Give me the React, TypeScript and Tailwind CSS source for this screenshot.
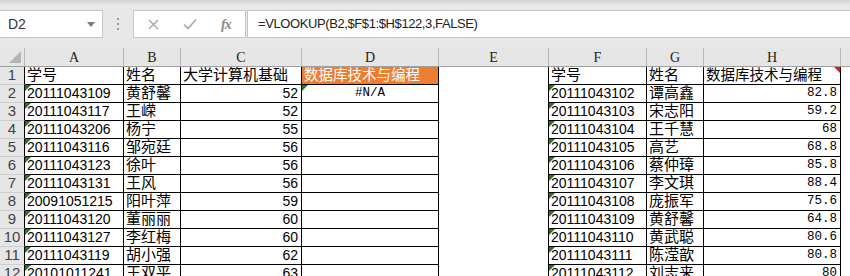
import React from 'react';

const sans = "font-['Liberation_Sans','Noto_Sans_CJK_SC',sans-serif]";
const mono = "font-['Liberation_Mono','Noto_Sans_CJK_SC',monospace]";

const left = [
    ['20111043109', '黄舒馨', '52'],
    ['20111043117', '王嵘', '52'],
    ['20111043206', '杨宁', '55'],
    ['20111043116', '邹宛廷', '56'],
    ['20111043123', '徐叶', '56'],
    ['20111043131', '王风', '56'],
    ['20091051215', '阳叶萍', '59'],
    ['20111043120', '董丽丽', '60'],
    ['20111043127', '李红梅', '60'],
    ['20111043119', '胡小强', '62'],
    ['20101011241', '王双平', '63'],
];

const right = [
    ['20111043102', '谭高鑫', '82.8'],
    ['20111043103', '宋志阳', '59.2'],
    ['20111043104', '王千慧', '68'],
    ['20111043105', '高艺', '68.8'],
    ['20111043106', '蔡仲璋', '85.8'],
    ['20111043107', '李文琪', '88.4'],
    ['20111043108', '庞振军', '75.6'],
    ['20111043109', '黄舒馨', '64.8'],
    ['20111043110', '黄武聪', '80.6'],
    ['20111043111', '陈滢歆', '80.8'],
    ['20111043112', '刘志来', '80'],
];

const GreenMark = () => (
    <span className="absolute top-0 left-0 w-0 h-0 border-t-[6px] border-r-[6px] border-t-[#1f7a1f] border-r-transparent" />
);

// table cell with black grid border
const Cell = ({ w, children, className = '', mark = false }: { w: string; children?: React.ReactNode; className?: string; mark?: boolean }) => (
    <div className={`relative ${w} h-full shrink-0 border-r border-b border-black flex items-center overflow-hidden whitespace-nowrap ${className}`}>
        {mark && <GreenMark />}
        {children}
    </div>
);

const RowNum = ({ n }: { n: number }) => (
    <div className={`w-[25px] h-full shrink-0 bg-[#e6e6e6] border-r border-r-black border-b border-b-[#cfcfcf] flex items-center justify-center text-[15px] text-[#444] ${sans}`}>
        {n}
    </div>
);

const Toolbar = () => (
    <div className="h-[48px] bg-[linear-gradient(#d2d2d2,#e8e8e8_5px,#e8e8e8)] flex items-center">
        <div className={`w-[103px] h-[28px] bg-white border border-[#c6c6c6] border-l-0 flex items-center justify-between pl-[8px] pr-[7px] text-[14px] text-[#333] ${sans}`}>
            <span>D2</span>
            <span className="w-0 h-0 border-l-[4px] border-r-[4px] border-t-[5px] border-l-transparent border-r-transparent border-t-[#7a7a7a]" />
        </div>
        <div className="w-[30px] flex flex-col items-center gap-[3px]">
            <span className="w-[2px] h-[2px] bg-[#9a9a9a]" />
            <span className="w-[2px] h-[2px] bg-[#9a9a9a]" />
            <span className="w-[2px] h-[2px] bg-[#9a9a9a]" />
        </div>
        <div className="w-[113px] h-[28px] bg-white border border-[#c6c6c6] flex items-center pl-[14px] gap-[24px]">
            <svg width="11" height="11" viewBox="0 0 11 11">
                <path d="M1 1L10 10M10 1L1 10" stroke="#a8a8a8" strokeWidth="1.4" fill="none" />
            </svg>
            <svg width="14" height="12" viewBox="0 0 14 12">
                <path d="M1 6.5L5 10.5L13 1.5" stroke="#a8a8a8" strokeWidth="1.6" fill="none" />
            </svg>
            <span className="font-['Liberation_Serif',serif] italic font-bold text-[14px] text-[#8a8a8a] tracking-[-1px]">fx</span>
        </div>
        <div className={`flex-1 h-[28px] ml-[1px] bg-white border border-[#c6c6c6] border-r-0 flex items-center pl-[10px] text-[13px] tracking-[-0.4px] text-[#222] ${sans}`}>
            =VLOOKUP(B2,$F$1:$H$122,3,FALSE)
        </div>
    </div>
);

const HeaderRow = () => {
    const heads: [string, string][] = [
        ['A', 'w-[99px]'],
        ['B', 'w-[57px]'],
        ['C', 'w-[121px]'],
        ['D', 'w-[137px]'],
        ['E', 'w-[110px]'],
        ['F', 'w-[98px]'],
        ['G', 'w-[57px]'],
        ['H', 'w-[137px]'],
    ];
    return (
        <div className="h-[19px] flex bg-[#e6e6e6] border-b border-[#9f9f9f]">
            <div className="relative w-[25px] shrink-0 border-r border-[#b8b8b8]">
                <span className="absolute right-[3px] bottom-[3px] w-0 h-0 border-b-[12px] border-l-[12px] border-b-[#b5b5b5] border-l-transparent" />
            </div>
            {heads.map(([l, w]) => (
                <div key={l} className={`${w} shrink-0 border-r border-[#b8b8b8] flex items-center justify-center text-[14px] text-[#222] font-['Liberation_Serif',serif]`}>
                    {l}
                </div>
            ))}
            <div className="flex-1" />
        </div>
    );
};

const App: React.FC = () => {
    return (
        <div className="w-[850px] h-[276px] overflow-hidden bg-white">
            <Toolbar />
            <HeaderRow />
            {/* row 1: headers of both tables */}
            <div className="h-[18px] flex">
                <RowNum n={1} />
                <Cell w="w-[99px]" className={`pl-[2px] text-[15px] ${sans}`}>学号</Cell>
                <Cell w="w-[57px]" className={`pl-[2px] text-[15px] ${sans}`}>姓名</Cell>
                <Cell w="w-[121px]" className={`pl-[2px] text-[15px] ${sans}`}>大学计算机基础</Cell>
                <Cell w="w-[137px]" className={`pl-[2px] text-[14.5px] text-white bg-[#ed7d31] ${sans}`}>数据库技术与编程</Cell>
                <div className="w-[110px] h-full shrink-0 border-r border-black" />
                <Cell w="w-[98px]" className={`pl-[2px] text-[15px] ${sans}`}>学号</Cell>
                <Cell w="w-[57px]" className={`pl-[2px] text-[15px] ${sans}`}>姓名</Cell>
                <Cell w="w-[137px]" className={`pl-[2px] text-[14.5px] ${sans}`}>
                    数据库技术与编程
                    <span className="absolute top-0 right-0 w-0 h-0 border-t-[6px] border-l-[6px] border-t-[#e8151b] border-l-transparent" />
                </Cell>
                <div className="flex-1" />
            </div>
            {left.map((r, i) => {
                const rr = right[i];
                return (
                    <div key={i} className="h-[18px] flex">
                        <RowNum n={i + 2} />
                        <Cell w="w-[99px]" mark className={`pl-[2px] text-[14px] ${sans}`}>{r[0]}</Cell>
                        <Cell w="w-[57px]" className={`pl-[2px] text-[15px] ${sans}`}>{r[1]}</Cell>
                        <Cell w="w-[121px]" className={`justify-end pr-[3px] text-[14px] ${sans}`}>{r[2]}</Cell>
                        <Cell w="w-[137px]" mark={i === 0} className={`justify-center text-[12.5px] ${mono}`}>{i === 0 ? '#N/A' : ''}</Cell>
                        <div className="w-[110px] h-full shrink-0 border-r border-black" />
                        <Cell w="w-[98px]" mark className={`pl-[2px] text-[14px] ${sans}`}>{rr[0]}</Cell>
                        <Cell w="w-[57px]" className={`pl-[2px] text-[15px] ${sans}`}>{rr[1]}</Cell>
                        <Cell w="w-[137px]" className={`justify-end pr-[3px] text-[12.5px] ${mono}`}>{rr[2]}</Cell>
                        <div className="flex-1" />
                    </div>
                );
            })}
        </div>
    );
};

export default App;
